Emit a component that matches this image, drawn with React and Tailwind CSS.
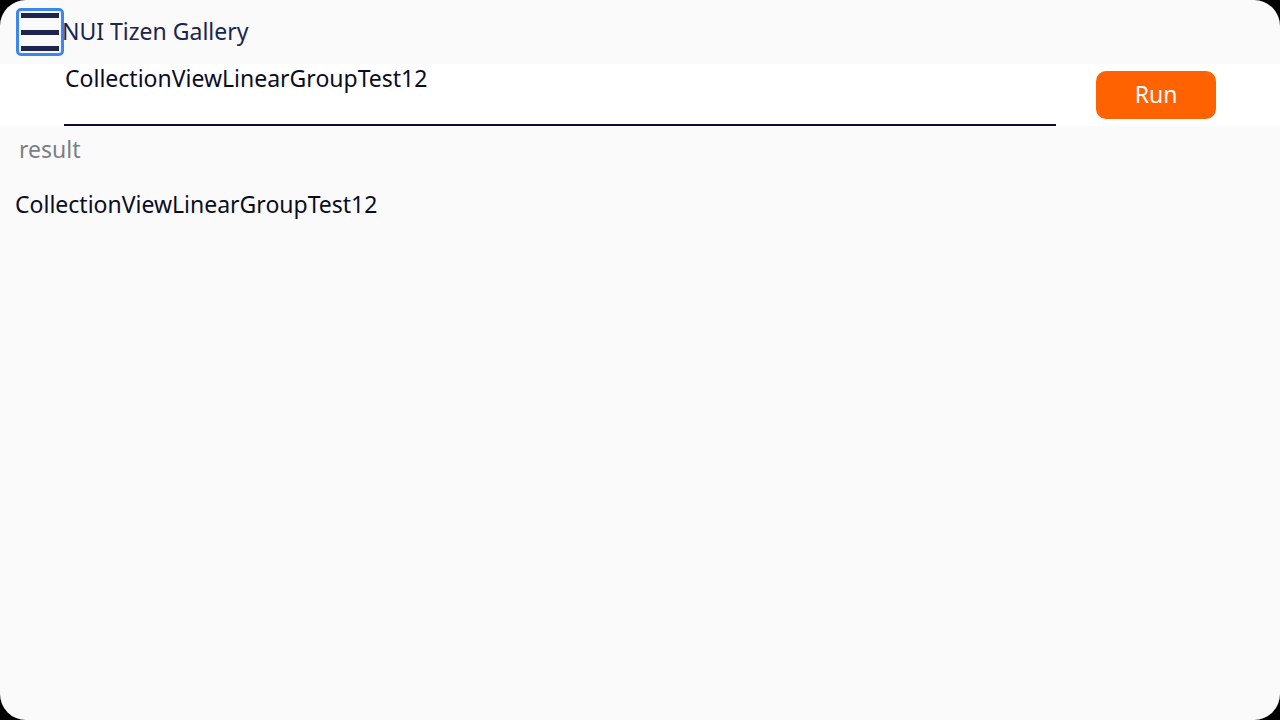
export default function App() {
  return (
    <div className="w-[1280px] h-[720px] bg-black" style={{ fontFamily: '"Noto Sans", "Open Sans", sans-serif' }}>
      <div className="w-full h-full bg-[#fafafa] rounded-[26px] overflow-hidden flex flex-col">
        <div className="h-[64px] flex items-center pl-[16px]">
          <div className="w-[48px] h-[48px] rounded-[5px] border-[3px] border-[#3b86f0] flex flex-col justify-between px-[2px] py-[2px] box-border">
            <div className="h-[5px] bg-[#1b2550]" />
            <div className="h-[5px] bg-[#1b2550]" />
            <div className="h-[5px] bg-[#1b2550]" />
          </div>
          <span className="text-[23px] text-[#1b2550] -ml-[2px] leading-none -mt-[1px]">NUI Tizen Gallery</span>
        </div>
        <div className="h-[62px] bg-white flex items-start">
          <div className="ml-[64px] w-[992px] h-[62px] border-b-2 border-[#0b0d3d] box-border">
            <div className="pl-[1px] pt-0 text-[23px] leading-[28px] text-[#0b0d1f]">CollectionViewLinearGroupTest12</div>
          </div>
          <button className="ml-[40px] mt-[7px] w-[120px] h-[48px] pb-[2px] rounded-[10px] bg-[#ff6200] text-white text-[23px] leading-none">Run</button>
        </div>
        <div className="pl-[19px] pt-[9px] text-[23px] leading-[28px] text-[#7d7f85]">result</div>
        <div className="pl-[15px] pt-[27px] text-[23px] leading-[28px] text-[#0b0d1f]">CollectionViewLinearGroupTest12</div>
      </div>
    </div>
  );
}
